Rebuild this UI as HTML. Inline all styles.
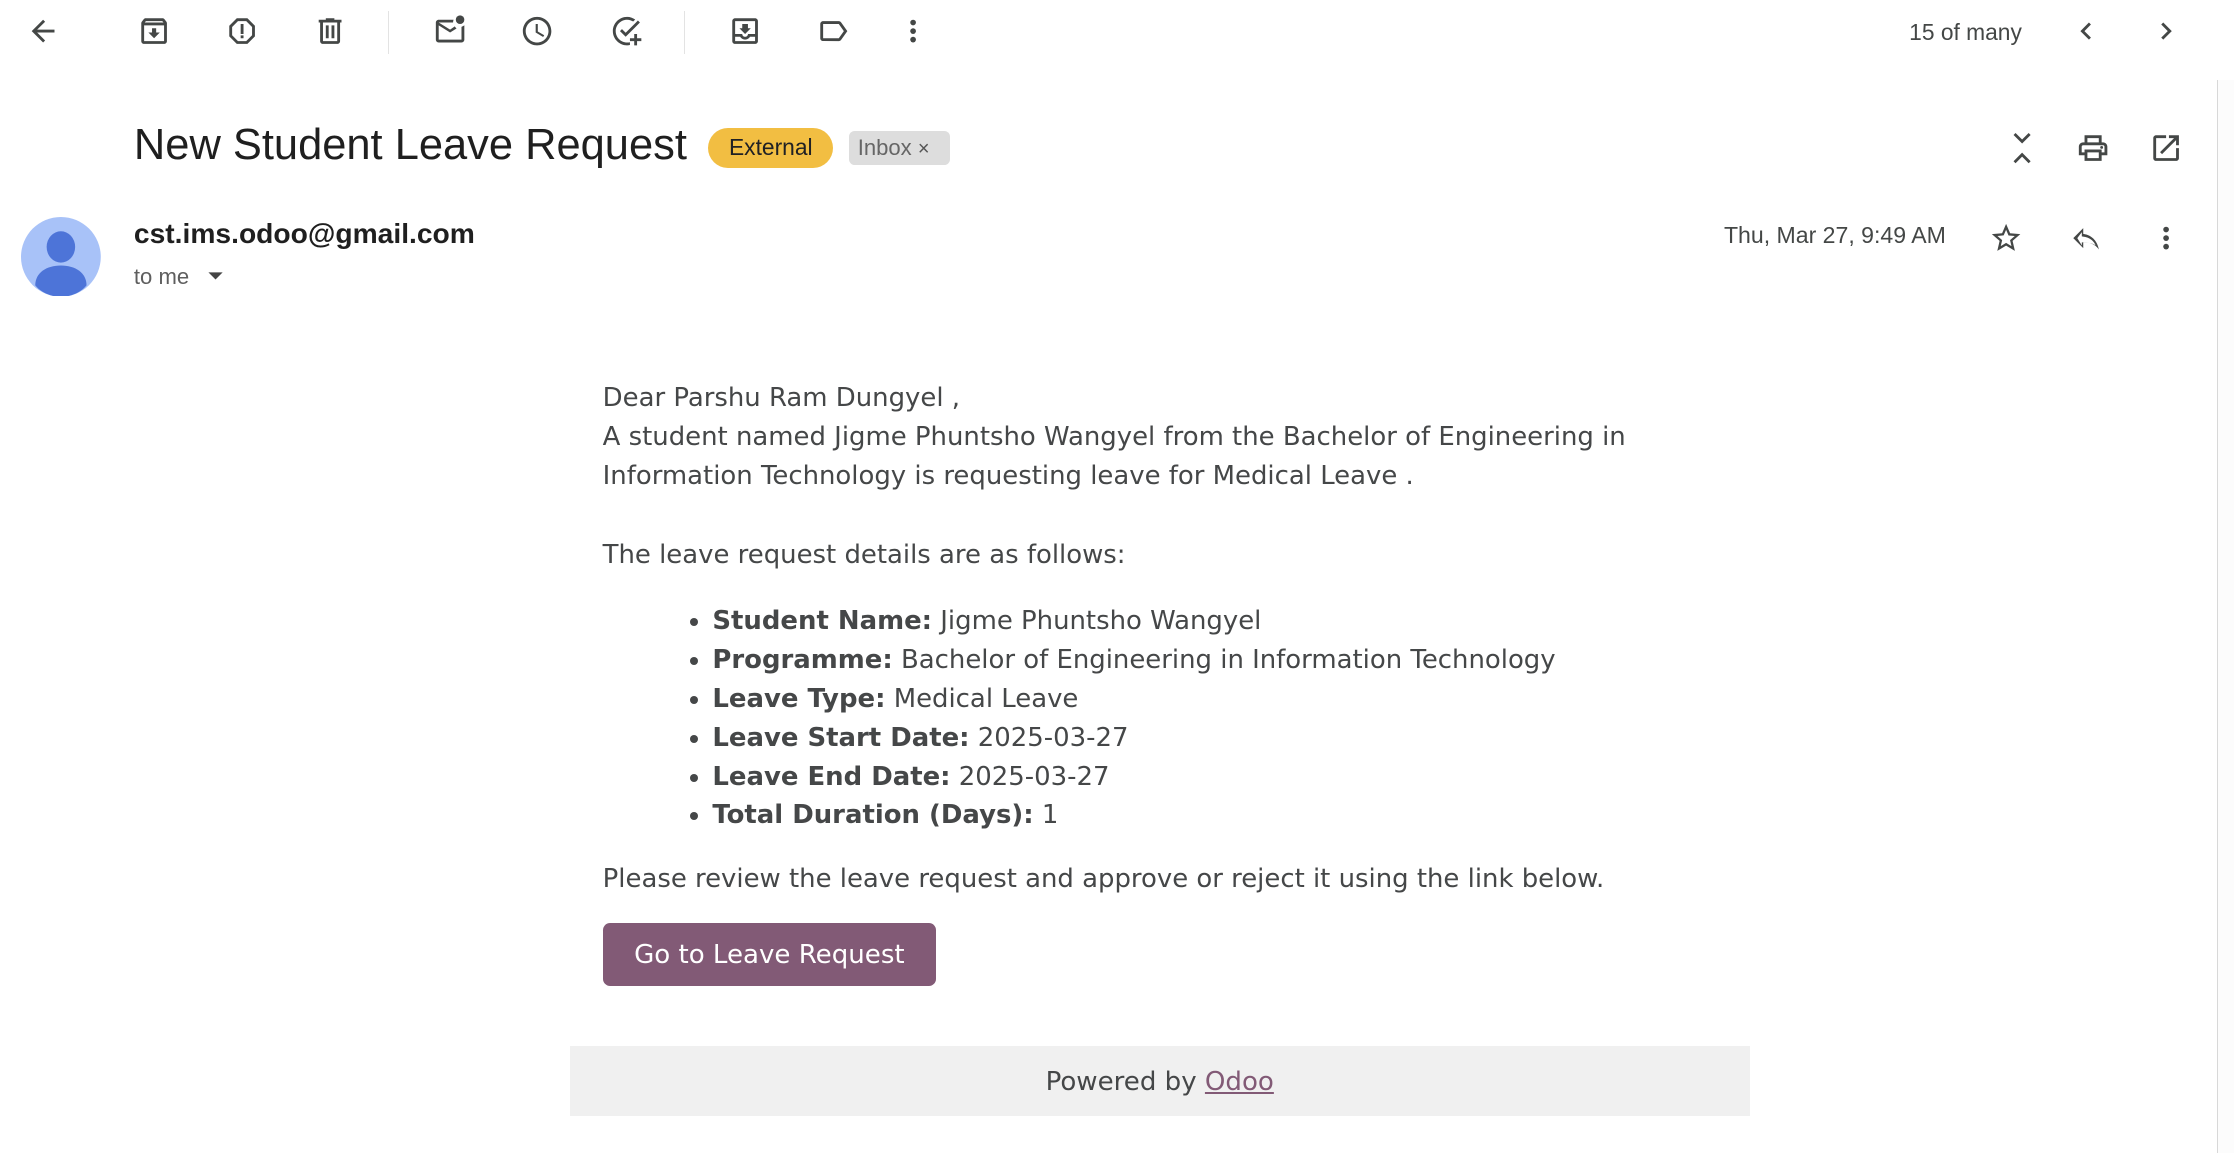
<!DOCTYPE html>
<html><head><meta charset="utf-8"><style>
html,body{margin:0;padding:0;background:#fff;overflow:hidden}
#w{position:relative;width:1568px;height:809px;zoom:1.42475;font-family:"Liberation Sans",Arial,sans-serif;color:#202124}
.a{position:absolute}
svg.i{position:absolute;width:24px;height:24px;fill:#444746}
.sep{position:absolute;top:8px;width:1px;height:30px;background:#e3e3e3}
.body{position:absolute;left:423px;top:266px;font-family:"DejaVu Sans",Verdana,sans-serif;font-size:18.2px;line-height:27.5px;color:#454748}
.body ul{margin:19px 0 0 0;padding-left:77px}
.body li{line-height:27.3px}
</style></head><body><div id="w">
<svg class="i" style="left:18px;top:10px" viewBox="0 0 24 24"><path d="M20 11H7.83l5.59-5.59L12 4l-8 8 8 8 1.41-1.41L7.83 13H20z"/></svg>
<svg class="i" style="left:96px;top:10px" viewBox="0 0 24 24"><path d="M20.54 5.23 19.15 3.55C18.88 3.21 18.470 3 18 3H6c-.47 0-.88.21-1.160.55L3.46 5.23C3.17 5.57 3 6.02 3 6.5V19c0 1.1.9 2 2 2h14c1.1 0 2-.9 2-2V6.5c0-.48-.17-.93-.46-1.27zM6.24 5h11.52l.81 1H5.44l.8-1zM5 19V8h14v11H5zm8.45-9h-2.9v3H8l4 4 4-4h-2.55z"/></svg>
<svg class="i" style="left:158px;top:10px" viewBox="0 0 24 24"><path d="M15.73 3H8.27L3 8.27v7.46L8.27 21h7.46L21 15.73V8.27L15.73 3zM19 14.9 14.9 19H9.1L5 14.9V9.1L9.1 5h5.8L19 9.1v5.8zM11 7h2v7h-2zm0 8h2v2h-2z"/></svg>
<svg class="i" style="left:220px;top:10px" viewBox="0 0 24 24"><path d="M15 4V3H9v1H4v2h1v13c0 1.1.9 2 2 2h10c1.1 0 2-.9 2-2V6h1V4h-5zm2 15H7V6h10v13zM9 8h2v9H9zm4 0h2v9h-2z"/></svg>
<div class="sep" style="left:272px"></div>
<svg class="i" style="left:304px;top:10px" viewBox="0 0 24 24"><path d="M20 8v10H4V8l8 5 4.5-2.8c-.5-.4-.9-.9-1.2-1.5L12 11 4 6h10.1c0-.7.1-1.4.4-2H4c-1.1 0-2 .9-2 2v12c0 1.1.9 2 2 2h16c1.1 0 2-.9 2-2V7.9c-.6.5-1.3.8-2 1.1z"/><circle cx="19" cy="4" r="3"/></svg>
<svg class="i" style="left:365px;top:10px" viewBox="0 0 24 24"><path d="M11.99 2C6.47 2 2 6.48 2 12s4.47 10 9.99 10C17.52 22 22 17.52 22 12S17.52 2 11.99 2zM12 20c-4.42 0-8-3.58-8-8s3.58-8 8-8 8 3.58 8 8-3.58 8-8 8zm.5-13H11v6l5.25 3.15.75-1.23-4.5-2.67z"/></svg>
<svg class="i" style="left:428px;top:10px" viewBox="0 0 24 24"><path d="M12 20c-4.4 0-8-3.6-8-8s3.6-8 8-8c1.6 0 3 .5 4.3 1.3l1.4-1.4C16.1 2.7 14.1 2 12 2 6.5 2 2 6.5 2 12s4.5 10 10 10c.7 0 1.4-.1 2-.2v-2c-.6.1-1.3.2-2 .2zm7.6-15.4L11 13.2 8.4 10.6 7 12l4 4 10-10zM19 14h-2v3h-3v2h3v3h2v-3h3v-2h-3z"/></svg>
<div class="sep" style="left:480px"></div>
<svg class="i" style="left:511px;top:10px" viewBox="0 0 24 24"><path d="M19 3H5c-1.1 0-2 .9-2 2v14c0 1.1.9 2 2 2h14c1.1 0 2-.9 2-2V5c0-1.1-.9-2-2-2zm0 16H5v-3h3.56c.69 1.19 1.97 2 3.45 2s2.75-.81 3.45-2H19v3zm0-5h-4.99c0 1.1-.9 2-2 2s-2-.9-2-2H5V5h14v9zm-3-4h-2V7h-4v3H8l4 4 4-4z"/></svg>
<svg class="i" style="left:573px;top:10px" viewBox="0 0 24 24"><path d="M17.63 5.84C17.27 5.33 16.67 5 16 5L5 5.01C3.9 5.01 3 5.9 3 7v10c0 1.1.9 1.99 2 1.99L16 19c.67 0 1.27-.33 1.63-.84L22 12l-4.37-6.16zM16 17H5V7h11l3.55 5L16 17z"/></svg>
<svg class="i" style="left:629px;top:10px" viewBox="0 0 24 24"><circle cx="12" cy="6" r="2"/><circle cx="12" cy="12" r="2"/><circle cx="12" cy="18" r="2"/></svg>
<div class="a" style="left:1340px;top:13px;font-size:16px;color:#444746">15 of many</div>
<svg class="i" style="left:1452px;top:10px" viewBox="0 0 24 24"><path d="M15.41 7.41 14 6l-6 6 6 6 1.41-1.41L10.83 12z"/></svg>
<svg class="i" style="left:1508px;top:10px" viewBox="0 0 24 24"><path d="M10 6 8.59 7.41 13.17 12l-4.58 4.59L10 18l6-6z"/></svg>
<div class="a" style="left:1556px;top:56px;width:12px;height:753px;border-left:1px solid #d8d8d8;background:#fcfcfc"></div>
<div class="a" style="left:94px;top:85px;font-size:30.5px;color:#1f1f1f">New Student Leave Request</div>
<div class="a" style="left:497px;top:90px;height:28px;width:88px;border-radius:14px;background:#f2be42;font-size:16px;line-height:28px;text-align:center;color:#202124">External</div>
<div class="a" style="left:596px;top:92px;height:24px;width:71px;border-radius:4px;background:#dddddd;font-size:15.5px;line-height:24px;color:#666;padding-left:6px;box-sizing:border-box">Inbox <span style="font-size:14px;color:#555">×</span></div>
<svg class="i" style="left:1407px;top:92px" viewBox="0 0 24 24"><path d="M7.4 1.4 6 2.8l6 6 6-6-1.4-1.4L12 6zM16.6 22.6 18 21.2l-6-6-6 6 1.4 1.4L12 18z" /></svg>
<svg class="i" style="left:1457px;top:92px" viewBox="0 0 24 24"><path d="M19 8h-1V3H6v5H5c-1.66 0-3 1.34-3 3v6h4v4h12v-4h4v-6c0-1.66-1.34-3-3-3zM8 5h8v3H8V5zm8 14H8v-4h8v4zm2-4v-2H6v2H4v-4c0-.55.45-1 1-1h14c.55 0 1 .45 1 1v4h-2z"/><circle cx="18" cy="11.5" r="1"/></svg>
<svg class="i" style="left:1508px;top:92px" viewBox="0 0 24 24"><path d="M19 19H5V5h7V3H5c-1.11 0-2 .9-2 2v14c0 1.1.89 2 2 2h14c1.1 0 2-.9 2-2v-7h-2v7zM14 3v2h3.59l-9.830 9.83 1.41 1.41L19 6.41V10h2V3h-7z"/></svg>
<svg class="a" style="left:15px;top:152px" width="56" height="56" viewBox="0 0 56 56"><circle cx="28" cy="28" r="28" fill="#a8c2f8"/><ellipse cx="28" cy="21" rx="10" ry="11" fill="#4d74d8"/><path d="M10 48c0-9 8-14 18-14s18 5 18 14c-4 5-11 8-18 8s-14-3-18-8z" fill="#4d74d8"/></svg>
<div class="a" style="left:94px;top:152px;font-size:19.8px;font-weight:bold;color:#1f1f1f">cst.ims.odoo@gmail.com</div>
<div class="a" style="left:94px;top:185px;font-size:15.5px;color:#5e5e5e">to me</div>
<svg class="a" style="left:145px;top:190px" width="12" height="8" viewBox="0 0 12 8"><path d="M1 1h10L6 6z" fill="#444"/></svg>
<div class="a" style="left:1210px;top:156px;font-size:16.2px;color:#444746">Thu, Mar 27, 9:49 AM</div>
<svg class="i" style="left:1396px;top:155px" viewBox="0 0 24 24"><path d="m22 9.24-7.19-.62L12 2 9.19 8.63 2 9.24l5.46 4.73L5.82 21 12 17.27 18.18 21l-1.63-7.03L22 9.24zM12 15.4l-3.76 2.27 1-4.28-3.32-2.88 4.38-.38L12 6.1l1.71 4.04 4.38.38-3.32 2.88 1 4.28L12 15.4z"/></svg>
<svg class="i" style="left:1452px;top:155px" viewBox="0 0 24 24"><path d="M10 9V5l-7 7 7 7v-4.1c5 0 8.5 1.6 11 5.1-1-5-4-10-11-11zM9 7.83l-.01 2.98L9.9 11c4.63.64 7.2 2.7 8.780 6.07-2.57-1.68-5.77-2.070-8.68-2.07H9v2.17L5.83 12 9 7.830z"/></svg>
<svg class="i" style="left:1508px;top:155px" viewBox="0 0 24 24"><circle cx="12" cy="6" r="2"/><circle cx="12" cy="12" r="2"/><circle cx="12" cy="18" r="2"/></svg>
<div class="body">
Dear Parshu Ram Dungyel ,<br>
A student named Jigme Phuntsho Wangyel from the Bachelor of Engineering in<br>
Information Technology is requesting leave for Medical Leave .<br><br>
The leave request details are as follows:
<ul>
<li><b>Student Name:</b> Jigme Phuntsho Wangyel</li>
<li><b>Programme:</b> Bachelor of Engineering in Information Technology</li>
<li><b>Leave Type:</b> Medical Leave</li>
<li><b>Leave Start Date:</b> 2025-03-27</li>
<li><b>Leave End Date:</b> 2025-03-27</li>
<li><b>Total Duration (Days):</b> 1</li>
</ul>
<div style="margin-top:17px">Please review the leave request and approve or reject it using the link below.</div>
</div>
<div class="a" style="left:423px;top:648px;width:234px;height:44px;border-radius:5px;background:#825a76;color:#fff;font-family:'DejaVu Sans',Verdana,sans-serif;font-size:18.3px;line-height:45px;text-align:center">Go to Leave Request</div>
<div class="a" style="left:400px;top:734px;width:828px;height:49px;background:#f0f0f0;font-family:'DejaVu Sans',Verdana,sans-serif;font-size:18.3px;line-height:51px;text-align:center;color:#454748">Powered by <span style="color:#825a76;text-decoration:underline">Odoo</span></div>
</div></body></html>
